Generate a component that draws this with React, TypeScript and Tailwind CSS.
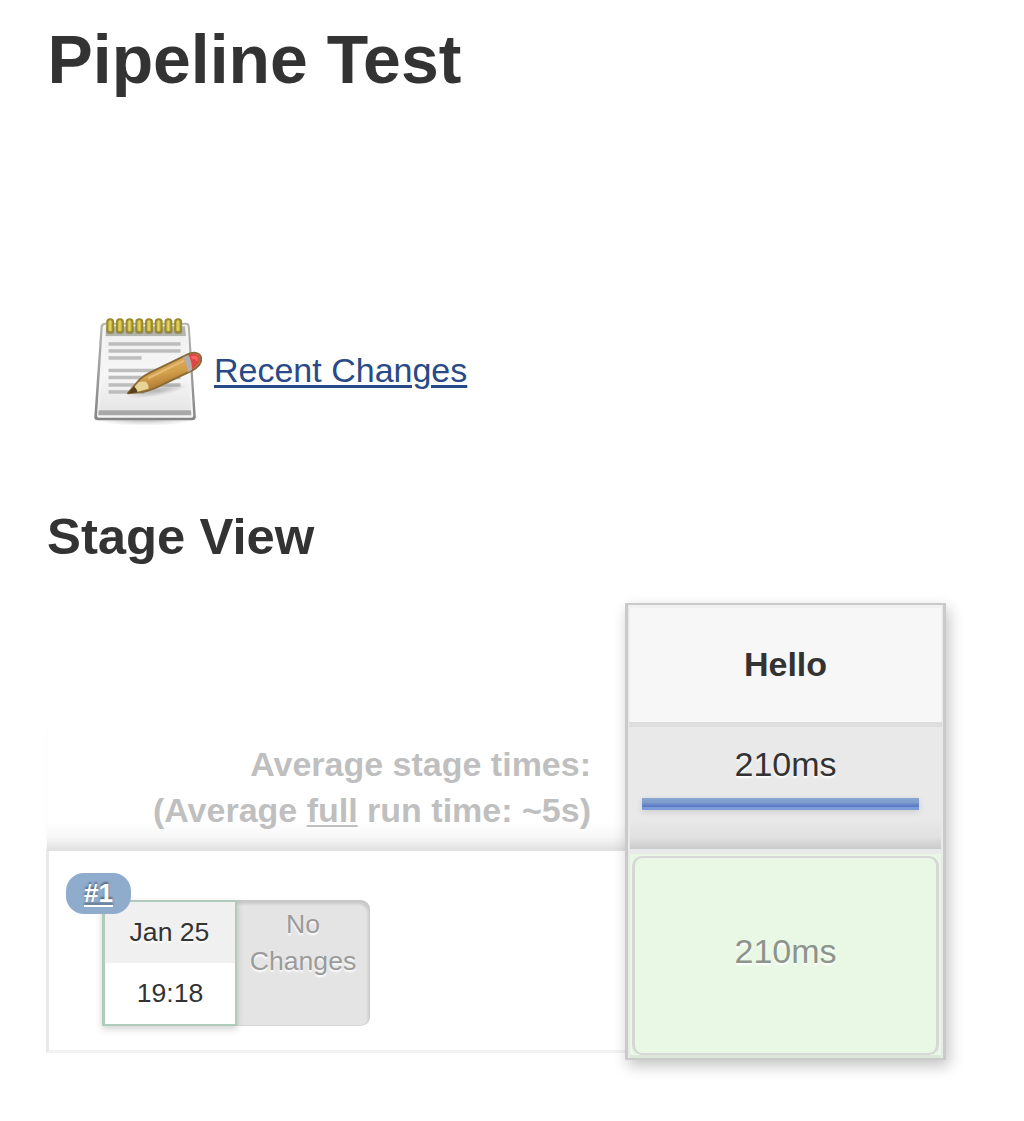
function NotepadIcon() {
  return (
    <svg width="112" height="112" viewBox="0 -0.7 112 112" className="block shrink-0 blur-[0.5px]">
      <defs>
        <linearGradient id="paper" x1="0" y1="0" x2="0" y2="1">
          <stop offset="0" stopColor="#f0f0f0" />
          <stop offset="0.5" stopColor="#f7f7f7" />
          <stop offset="1" stopColor="#e6e6e6" />
        </linearGradient>
        <linearGradient id="frame" x1="0" y1="0" x2="0" y2="1">
          <stop offset="0" stopColor="#b4b6b1" />
          <stop offset="0.6" stopColor="#979995" />
          <stop offset="1" stopColor="#858585" />
        </linearGradient>
        <linearGradient id="ring" x1="0" y1="0" x2="1" y2="0">
          <stop offset="0" stopColor="#b5a132" />
          <stop offset="0.5" stopColor="#e6d765" />
          <stop offset="1" stopColor="#a08c20" />
        </linearGradient>
        <linearGradient id="wood" x1="0" y1="0" x2="0.45" y2="1">
          <stop offset="0.25" stopColor="#dfae5c" />
          <stop offset="0.6" stopColor="#d3a04b" />
          <stop offset="0.9" stopColor="#ad7730" />
        </linearGradient>
        <radialGradient id="ground">
          <stop offset="0" stopColor="#000" stopOpacity="0.25" />
          <stop offset="1" stopColor="#000" stopOpacity="0" />
        </radialGradient>
      </defs>
      <ellipse cx="55" cy="105" rx="50" ry="6" fill="url(#ground)" />
      <path d="M15 8H96Q99.500 8 99.800 12L105.800 102Q106 105.500 102 105.500H8Q4 105.500 4.300 102L10.500 12Q11 8 15 8Z" fill="url(#frame)" />
      <path d="M15.500 10H95.500Q97.700 10 97.900 13L103.300 101Q103.300 103 101 103H9Q6.700 103 7 101L12.700 13Q12.900 10 15.500 10Z" fill="#f4f4f4" />
      <path d="M16 11.500H95L96 21.500H15.500Z" fill="#b3b4ac" />
      <path d="M15.500 21.500H96L101 96H9Z" fill="url(#paper)" />
      <path d="M8.700 95.500H101L101.300 100.500H8.200Z" fill="#a8a8a8" />
      <g fill="#bdbdbd">
        <rect x="18.500" y="27.500" width="72" height="3.500" />
        <rect x="18.500" y="34.500" width="72" height="3.500" />
        <rect x="18.500" y="41.500" width="33" height="3.500" />
        <rect x="18.500" y="54" width="72" height="3.500" />
        <rect x="18.500" y="61" width="72" height="3.500" />
        <rect x="18.500" y="68.500" width="72" height="3.500" />
        <rect x="18.500" y="75.500" width="36" height="3.500" />
      </g>
      {[16.7, 26.4, 36.1, 45.8, 55.5, 65.2, 74.9, 84.6].map((x) => (
        <g key={x}>
          <rect x={x - 0.3} y="13" width="7.800" height="6" rx="2" fill="#8b8c78" />
          <rect x={x + 0.5} y="4.500" width="6" height="13" rx="2.800" fill="url(#ring)" stroke="#9a8a2c" strokeWidth="1.900" />
        </g>
      ))}
      <ellipse cx="67" cy="76" rx="31" ry="5.500" fill="url(#ground)" transform="rotate(-10 67 76)" />
      <path d="M38 78.500L50 64.500Q54 61 60 58L95 41Q104 36 109 39.500Q113.500 44 109 50.500Q107 53 102 56L64 74Q58 76.500 53 77Z" fill="url(#wood)" stroke="#8a6a38" strokeWidth="2" strokeLinejoin="round" />
      <path d="M48.500 67.500Q55 66 57 68Q59 71 58.500 74L48 77L42 75Z" fill="#e6d494" />
      <path d="M37.500 79L44 71.500Q47 74 47.500 77.500Z" fill="#58411f" />
      <path d="M58 63.500L94 46" stroke="#e3bb72" strokeWidth="2.200" />
      <path d="M93 42.500L98.500 40.300Q102 46 102 55L98 57.500Q97 50 93 42.500Z" fill="#b5adae" />
      <path d="M98.500 40.300Q105 37.500 108.500 40.500Q112 45 107.500 50L102 54.500Q102 47 98.500 40.300Z" fill="#dc4644" />
      <path d="M101 42Q105 40 107.500 42Q109 45 107 47Q104 43 102 45Z" fill="#f5625f" />
    </svg>
  );
}

function BuildRow() {
  return (
    <div className="relative h-[202px] border-b-[3px] border-l-[3px] border-[#e9e9e9] border-b-[#f2f2f2] pt-[49px] pl-[53px]">
      <div className="flex h-[126px] w-[268px]">
        <div className="relative z-10 h-[126px] w-[135px] border-t-2 border-r-2 border-b-2 border-l-[3px] border-[#aecbbc] bg-white text-center text-[26.600px] shadow-[0_3px_7px_rgba(0,0,0,0.18)] [text-shadow:0_2px_2px_white]">
          <div className="h-[61px] bg-[#f0f0f0] pr-px leading-[60px]">Jan 25</div>
          <div className="h-[61px] leading-[60px]">19:18</div>
        </div>
        <div className="h-[126px] w-[133px] rounded-r-[9px] bg-[#e4e4e4] pt-[6px] pr-px text-center text-[26.600px] leading-[36.500px] text-[#9b9b9b] shadow-[inset_-2px_4px_3px_rgba(0,0,0,0.12),inset_0_-1px_1px_rgba(0,0,0,0.06)] [text-shadow:0_2px_2px_white]">
          No
          <br />
          Changes
        </div>
      </div>
      <a href="#" className="absolute top-[22px] left-[17px] z-20 h-[41px] w-[65px] rounded-[18px] bg-[#90accd] text-center text-[26px] leading-[41px] font-bold text-white underline decoration-2 underline-offset-[3px] [text-shadow:0_-2px_2px_rgba(0,0,0,0.4)]">
        #1
      </a>
    </div>
  );
}

function StageColumn() {
  return (
    <div className="relative z-10 h-[457px] w-[321px] shrink-0 border-x-[3px] border-y-2 border-[#cacaca] bg-[#e9e9e9] px-[2px] text-center text-[34px] shadow-[3px_6px_14px_rgba(0,0,0,0.24)]">
      <div className="-mx-px border-x border-t-[3px] border-[#f1f1f1]">
        <div className="h-[114px] bg-[#f7f7f7] leading-[112px] font-bold">Hello</div>
      </div>
      <div className="-mx-px h-[5px] bg-[#dedede]" />
      <div className="h-[122px] bg-linear-to-b from-[#e9e9e9] from-75% via-[#e1e1e1] via-90% to-[#cbcbcb] pt-[14px]">
        <div className="h-[57px] leading-[46px] [text-shadow:0_2px_2px_white]">210ms</div>
        <div className="ml-[12px] h-[12px] w-[277px] border-b-[3px] border-[#7b9cd8] bg-linear-to-b from-[#89a8d0] via-[#7d9bca] to-[#5574c6] shadow-[0_2px_6px_rgba(0,0,0,0.12)]" />
      </div>
      <div className="mt-[5px] h-[204px] border-b-[3px] border-[#dce9da] bg-[#e9f8e5] px-[2px] pt-[2px]">
        <div className="h-[199px] w-[307px] rounded-[10px] border-x-[3px] border-y-2 border-[#d7d7d7] leading-[187px] text-[#8c948b] [text-shadow:0_2px_2px_white]">
          210ms
        </div>
      </div>
    </div>
  );
}

export default function App() {
  return (
    <main className="h-[1121px] w-[1024px] overflow-hidden bg-white pl-[46px] font-['Liberation_Sans',Arial,sans-serif] text-[#333333]">
      <h1 className="pt-[20px] pl-[1.500px] text-[67.900px] leading-[80px] font-bold">Pipeline Test</h1>
      <div className="mt-[214px] flex h-[112px] items-center pl-[44px]">
        <NotepadIcon />
        <a href="#" className="ml-[12px] text-[34px] leading-[40px] text-[#294a87] underline decoration-[3px] underline-offset-[3px]">
          Recent Changes
        </a>
      </div>
      <h2 className="mt-[81px] pl-px text-[50.800px] leading-[60px] font-bold">Stage View</h2>
      <section className="mt-[36px] flex">
        <div className="w-[579px] shrink-0 pt-[127px]">
          <div className="h-[121px] border-b-[3px] border-l border-b-[#e2e2e2] border-l-[#fafafa] bg-linear-to-b from-white from-78% via-[#f7f7f7] via-91% to-[#e4e4e4] pt-[11px] pr-[34px] text-right text-[34px] leading-[46px] font-bold whitespace-nowrap text-[#bfbfbf]">
            Average stage times:
            <br />
            (Average <span className="underline decoration-2 underline-offset-[3px]">full</span> run time: ~5s)
          </div>
          <BuildRow />
        </div>
        <StageColumn />
      </section>
    </main>
  );
}
